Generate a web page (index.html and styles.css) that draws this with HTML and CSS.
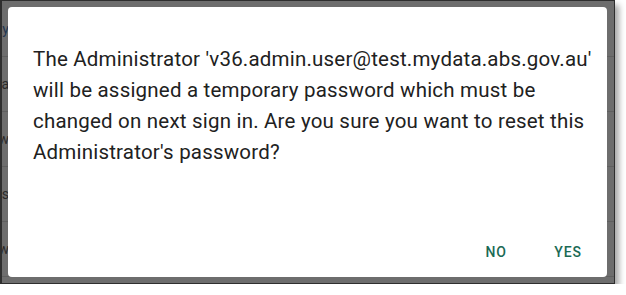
FILE: index.html
```html
<!DOCTYPE html>
<html lang="en">
<head>
    <meta charset="UTF-8">
    <meta name="viewport" content="width=device-width, initial-scale=1.0">
    <title>Reset Administrator Password</title>
    <link rel="stylesheet" href="styles.css">
</head>
<body>
    <div class="frame">
        <div class="page">
            <div class="row"><span class="cell link">Company</span></div>
            <div class="row"><span class="cell">test.a</span></div>
            <div class="row"><span class="cell">Row</span></div>
            <div class="row"><span class="cell">Pos</span></div>
            <div class="row"><span class="cell">Row</span></div>
        </div>
        <div class="dialog">
            <p class="dialog-text">The Administrator 'v36.admin.user@test.mydata.abs.gov.au' will be assigned a temporary password which must be changed on next sign in. Are you sure you want to reset this Administrator's password?</p>
            <div class="dialog-actions">
                <button type="button" class="btn">No</button>
                <button type="button" class="btn">Yes</button>
            </div>
        </div>
    </div>
</body>
</html>
```

FILE: styles.css
```css
* {
    margin: 0;
    padding: 0;
    box-sizing: border-box;
}

body {
    background-color: #ffffff;
    font-family: Roboto, 'Noto Sans', sans-serif;
}

.frame {
    position: relative;
    width: 615px;
    height: 284px;
    border: 1px solid #2e2e2e;
    border-left-width: 2px;
    background-color: #6d6d6d;
    overflow: hidden;
    box-shadow: 4px 5px 6px rgba(0, 0, 0, 0.35);
}

.page {
    display: flex;
    flex-direction: column;
}

.row {
    height: 55px;
    border-bottom: 1px solid #5f5f5f;
    display: flex;
    align-items: center;
}

.row:first-child {
    height: 56px;
}

.cell {
    display: block;
    width: 7px;
    overflow: hidden;
    direction: rtl;
    white-space: nowrap;
    font-size: 14px;
    color: #2a2a2a;
}

.link {
    color: #1f3550;
}

.dialog {
    position: absolute;
    left: 6px;
    top: 6px;
    width: 599px;
    height: 270px;
    background-color: #ffffff;
    border-radius: 4px;
    display: flex;
    flex-direction: column;
    justify-content: space-between;
    padding: 37px 7px 7px 25px;
}

.dialog-text {
    font-size: 20.5px;
    line-height: 31px;
    color: #212121;
    letter-spacing: 0.2px;
}

.dialog-actions {
    display: flex;
    justify-content: flex-end;
    gap: 8px;
}

.btn {
    background: none;
    border: none;
    font-family: Roboto, sans-serif;
    font-size: 14px;
    font-weight: 500;
    letter-spacing: 0.8px;
    text-transform: uppercase;
    color: #1b6a55;
    height: 36px;
    min-width: 64px;
    padding: 0 8px;
    cursor: pointer;
}
```
